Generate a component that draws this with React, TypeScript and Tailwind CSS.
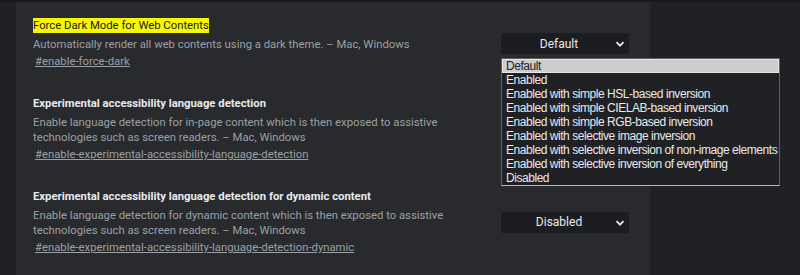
import React from "react";

type Flag = {
  title: string;
  desc: string;
  link: string;
  value: string;
  highlight?: boolean;
};

const flags: Flag[] = [
  {
    title: "Force Dark Mode for Web Contents",
    desc: "Automatically render all web contents using a dark theme. – Mac, Windows",
    link: "#enable-force-dark",
    value: "Default",
    highlight: true,
  },
  {
    title: "Experimental accessibility language detection",
    desc: "Enable language detection for in-page content which is then exposed to assistive technologies such as screen readers. – Mac, Windows",
    link: "#enable-experimental-accessibility-language-detection",
    value: "Enabled",
  },
  {
    title: "Experimental accessibility language detection for dynamic content",
    desc: "Enable language detection for dynamic content which is then exposed to assistive technologies such as screen readers. – Mac, Windows",
    link: "#enable-experimental-accessibility-language-detection-dynamic",
    value: "Disabled",
  },
];

const options = [
  "Default",
  "Enabled",
  "Enabled with simple HSL-based inversion",
  "Enabled with simple CIELAB-based inversion",
  "Enabled with simple RGB-based inversion",
  "Enabled with selective image inversion",
  "Enabled with selective inversion of non-image elements",
  "Enabled with selective inversion of everything",
  "Disabled",
];

const Chevron = () => (
  <svg width="10" height="10" viewBox="0 0 10 10" fill="none">
    <path d="M1.5 3.2 5 6.7 8.5 3.2" stroke="#e8eaed" strokeWidth="1.8" />
  </svg>
);

const SelectBox = ({ value, open }: { value: string; open?: boolean }) => (
  <div className="relative">
    <div className="flex h-[21px] w-[128px] items-center justify-center rounded-[2px] bg-[#1c1d20] text-[12px] text-[#e8eaed]">
      <span className="pr-[12px]">{value}</span>
      <span className="absolute right-[4px] top-[6px]">
        <Chevron />
      </span>
    </div>
    {open && (
      <ul className="absolute left-0 top-[25px] z-10 w-[279px] border border-[#5f6063] border-b-[#b9b9b9] bg-[#202124] font-['Liberation_Sans',Arial,sans-serif] text-[12px] leading-[12px] tracking-[-0.45px] whitespace-nowrap text-[#e8eaed]">
        {options.map((o) => (
          <li
            key={o}
            className={
              o === value
                ? "border border-[#e6e6e6] bg-[#cdcdcd] px-[3px] text-[#202124]"
                : "border border-transparent px-[3px]"
            }
          >
            {o}
          </li>
        ))}
      </ul>
    )}
  </div>
);

export default function App() {
  return (
    <div className="flex h-[275px] w-[800px] flex-col overflow-hidden bg-[#202124] font-['Roboto',sans-serif]">
      <div className="h-[2px] bg-[#18191b]" />
      <div className="flex flex-1">
        <div className="w-[16px] bg-[#202124]" />
        <div className="flex w-[634px] flex-col gap-[25px] bg-[#292a2d] pl-[17px] pt-[15px]">
          {flags.map((f, i) => (
            <div key={f.link} className="flex items-center gap-[16px]">
              <div className="w-[452px]">
                <div
                  className={
                    f.highlight
                      ? "text-[11.3px] leading-[18px] text-[#202124]"
                      : "text-[11.3px] font-bold leading-[18px] text-[#e8eaed]"
                  }
                >
                  <span className={f.highlight ? "bg-[#f7f705] py-[1px]" : ""}>{f.title}</span>
                </div>
                <p className="mt-[2px] text-[11.3px] leading-[15px] text-[#9aa0a6]">{f.desc}</p>
                <a className="mt-[2px] block pl-[2px] text-[11.3px] leading-[16px] text-[#9aa0a6] underline">
                  {f.link}
                </a>
              </div>
              {i !== 1 && <SelectBox value={f.value} open={i === 0} />}
            </div>
          ))}
        </div>
        <div className="flex-1 bg-[#202124]" />
      </div>
    </div>
  );
}
